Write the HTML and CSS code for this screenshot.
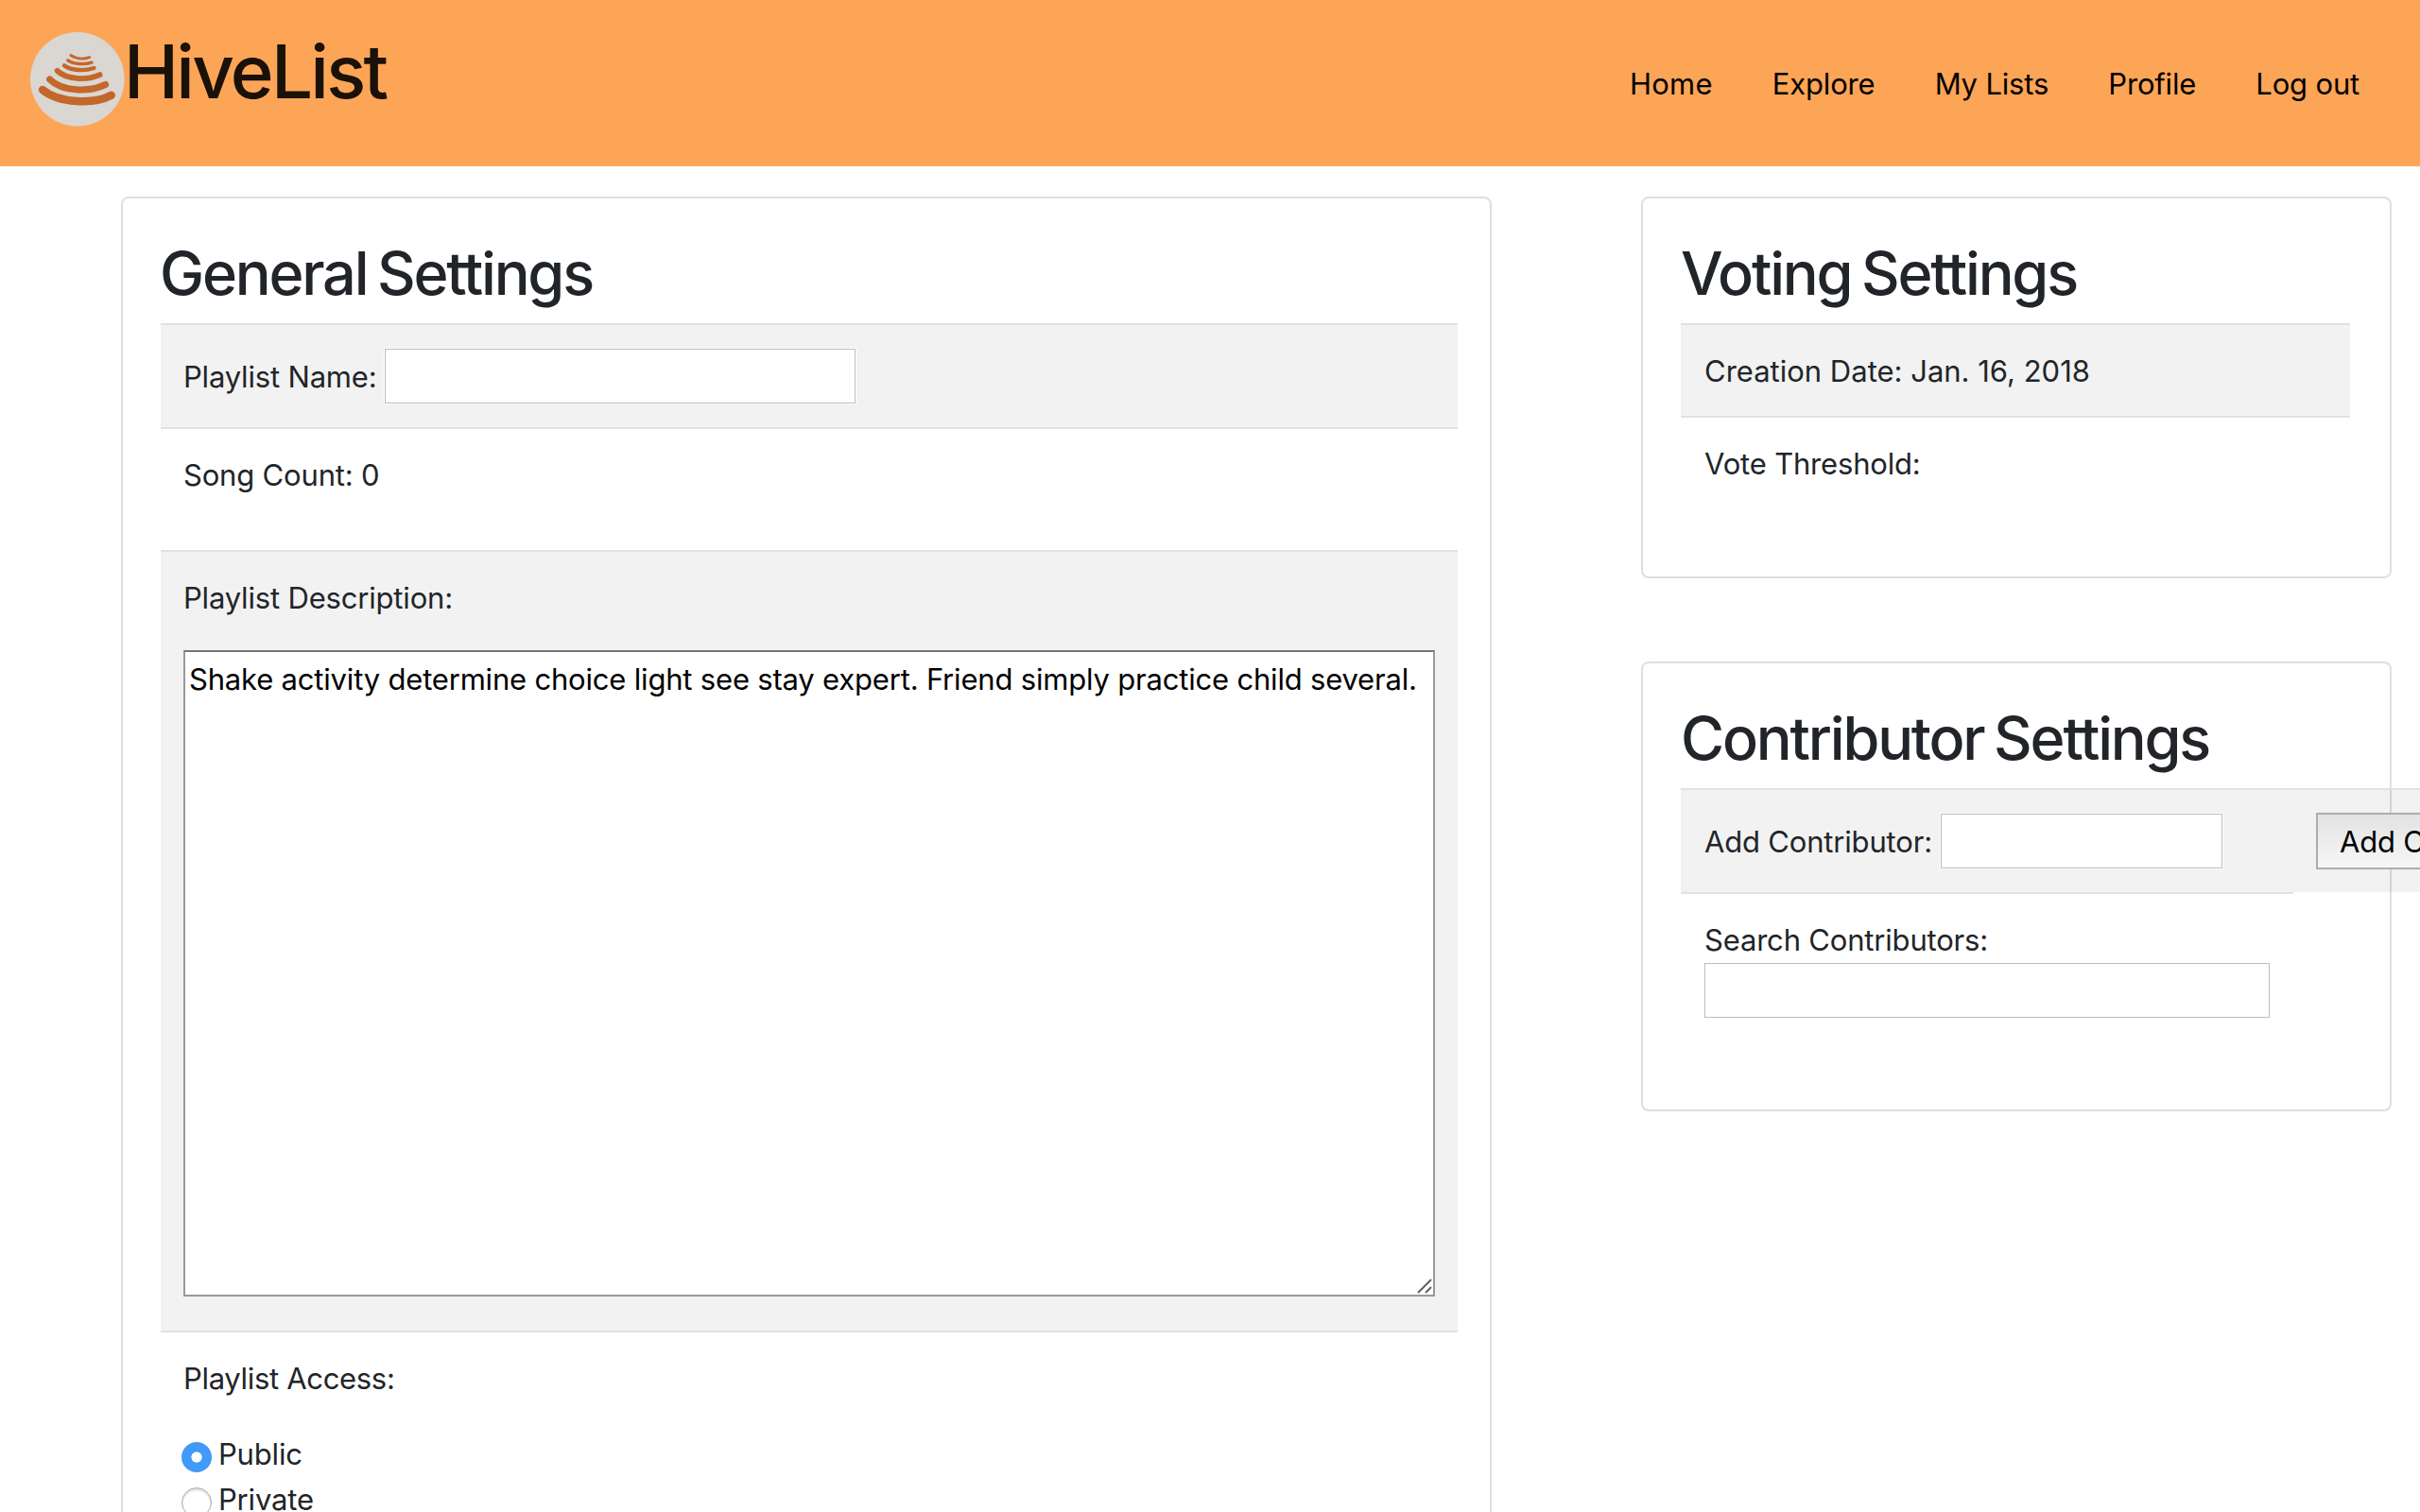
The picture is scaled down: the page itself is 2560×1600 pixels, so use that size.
FILE: index.html
```html
<!DOCTYPE html>
<html lang="en">
<head>
<meta charset="utf-8">
<title>HiveList</title>
<link rel="stylesheet" href="styles.css">
</head>
<body>
<header class="navbar">
  <a class="brand">
    <svg class="logo" viewBox="0 0 100 100" aria-hidden="true">
      <circle cx="49.8" cy="49.8" r="49.8" fill="#dad6d2"/>
      <g fill="none" stroke="#c4672a" stroke-linecap="round">
        <path stroke-width="2.7" d="M42.8 24.5C49 28.5 57 28.6 62.8 26.6"/>
        <path stroke-width="3.4" d="M39.8 29.8C46 34.3 58 34.5 65 32.2"/>
        <path stroke-width="4.4" d="M36 35.4C44 41 58 41.3 67.4 38"/>
        <path stroke-width="5.8" d="M28.6 40.9C38 50.3 60 51.3 73.6 45.1"/>
        <path stroke-width="7" d="M20.6 50C34 63.3 62 63.8 79.6 55.5"/>
        <path stroke-width="8.4" d="M13 61C30 75.5 68 76.5 85.8 66.8"/>
      </g>
    </svg>
    <span class="brand-name">HiveList</span>
  </a>
  <nav class="nav">
    <a class="nav-home">Home</a>
    <a>Explore</a>
    <a>My Lists</a>
    <a>Profile</a>
    <a>Log out</a>
  </nav>
</header>
<main class="content">
  <section class="card card-general">
    <h2>General Settings</h2>
    <div class="row row-field striped">
      <label class="label-name" for="name">Playlist Name:</label>
      <input class="field field-name" id="name" type="text">
    </div>
    <div class="row row-tall">Song Count: 0</div>
    <div class="row row-description striped">
      <label for="description">Playlist Description:</label>
      <div class="textarea-wrap">
        <textarea class="description" id="description">Shake activity determine choice light see stay expert. Friend simply practice child several.</textarea>
        <svg class="grip" viewBox="0 0 16 16" aria-hidden="true"><path d="M1 15 15 1M9 15l6-6" stroke="#5c5c5c" stroke-width="1.8" fill="none"/></svg>
      </div>
    </div>
    <div class="row">
      <div class="access-title">Playlist Access:</div>
      <label class="option"><input class="radio" type="radio" name="access" checked>Public</label>
      <label class="option"><input class="radio" type="radio" name="access">Private</label>
    </div>
  </section>
  <div class="side">
    <section class="card card-voting">
      <h2>Voting Settings</h2>
      <div class="row striped creation">Creation Date: Jan. 16, 2018</div>
      <div class="row">Vote Threshold:</div>
    </section>
    <section class="card card-contributors">
      <h2>Contributor Settings</h2>
      <div class="row row-field row-add striped">
        <label class="label-add" for="add">Add Contributor:</label>
        <input class="field field-add" id="add" type="text">
        <button class="button">Add Contributor</button>
      </div>
      <div class="row row-search">
        <label for="search">Search Contributors:</label>
        <input class="field field-search" id="search" type="text">
      </div>
    </section>
  </div>
</main>
</body>
</html>
```

FILE: styles.css
```css
* { box-sizing: border-box; }

body {
  margin: 0;
  height: 1600px;
  overflow: hidden;
  background: #fff;
  color: #212529;
  font: 400 31px/48px Inter, "Liberation Sans", sans-serif;
  letter-spacing: -0.18px;
}

input, textarea, button { font: inherit; letter-spacing: inherit; margin: 0; }

.navbar {
  display: flex;
  justify-content: space-between;
  align-items: flex-start;
  height: 176px;
  padding: 0 64px 0 32px;
  background: #fda557;
  color: #000;
}
.brand { display: flex; align-items: flex-start; }
.logo { width: 100px; height: 100px; margin-top: 34px; }
.brand-name {
  margin: 28px 0 0 -1px;
  color: #1a1109;
  font-size: 78px;
  font-weight: 500;
  line-height: 96px;
  letter-spacing: -2.75px;
}
.nav { display: flex; gap: 63.2px; padding-top: 65px; }
.nav-home { letter-spacing: 0.2px; }

.content { display: flex; align-items: flex-start; padding: 32px 0 0 128px; }
.side { display: flex; flex-direction: column; gap: 88px; margin-left: 158px; }

.card {
  border: 2px solid #dfdfdf;
  border-radius: 8px;
  padding: 40px 34px 0 40px;
}
.card-general { width: 1450px; height: 1500px; }
.card-voting { width: 794px; height: 404px; padding-right: 42px; }
.card-contributors { width: 794px; height: 476px; }

h2 {
  margin: 0 0 14px;
  font-size: 63px;
  font-weight: 500;
  line-height: 78px;
  letter-spacing: -2.2px;
  word-spacing: -4px;
  white-space: nowrap;
}
.card-general h2 { margin-left: -1px; }

.row { border-top: 2px solid #dee2e6; padding: 25px 24px 23px; }
.striped { background: rgba(0, 0, 0, 0.05); background-clip: padding-box; }
.row-tall { padding-bottom: 55px; }

.row-field {
  display: flex;
  align-items: center;
  height: 110px;
  padding: 0 24px;
}
.row-field label { flex: none; padding-top: 2px; }
.label-name { width: 213px; }
.label-add { width: 250px; }
.side .row { padding-left: 25px; }
.creation { letter-spacing: 0; }

.field {
  flex: none;
  height: 58px;
  padding: 0 4px;
  border: 1px solid #bcbcbc;
  border-radius: 0;
  box-shadow: 0 0 0 1px #fff;
  background: #fff;
  outline: none;
}
.field-name { width: 498px; }
.field-add { width: 298px; }
.field-search { display: block; width: 598px; }

.row-description { padding-bottom: 36px; }
.row-description label { display: block; margin-bottom: 31px; }
.textarea-wrap { position: relative; height: 684px; }
.description {
  display: block;
  width: 1324px;
  height: 684px;
  padding: 5px 4px;
  border: 2px solid #999;
  border-top-color: #757575;
  border-radius: 0;
  background: #fff;
  color: #000;
  letter-spacing: -0.19px;
  resize: none;
  overflow: hidden;
  outline: none;
}
.grip { position: absolute; right: 3px; bottom: 3px; width: 16px; height: 16px; }

.access-title { margin-bottom: 32px; letter-spacing: -0.32px; }
.option { display: flex; align-items: flex-start; margin-left: -2px; }
.radio {
  appearance: none;
  flex: none;
  width: 32px;
  height: 32px;
  margin: 11px 7px 0 0;
  border: 1px solid #aaa;
  border-radius: 50%;
  background: #fff;
  box-shadow: inset 0 2px 2px rgba(0, 0, 0, 0.15);
}
.radio:checked {
  border: 0;
  background: radial-gradient(circle, #fff 5.2px, #4199f9 6px);
  box-shadow: none;
}

.row-add { width: 1040px; }
.button {
  flex: none;
  height: 60px;
  margin-left: 99px;
  padding: 2px 23px 0;
  border: 2px solid #adadad;
  border-radius: 0;
  background: linear-gradient(#e2e2e2, #f7f7f7);
  color: #000;
  line-height: 54px;
  white-space: nowrap;
}
.row-search { width: 648px; }
```
